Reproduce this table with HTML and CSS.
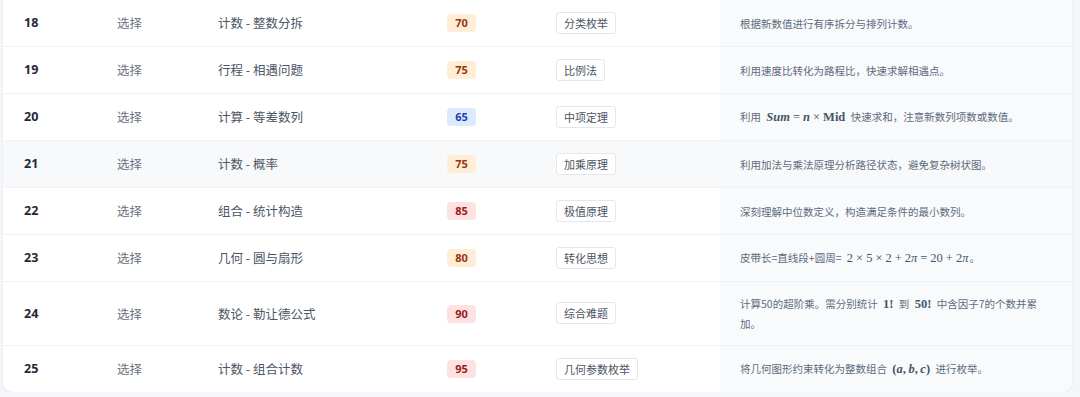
FILE: index.html
```html
<!DOCTYPE html>
<html lang="zh-CN">
<head>
<meta charset="utf-8">
<title>题目分析</title>
<link rel="stylesheet" href="styles.css">
</head>
<body>
<div class="card">
  <table class="tbl">
    <colgroup>
      <col class="c1"><col class="c2"><col class="c3"><col class="c4"><col class="c5"><col class="c6">
    </colgroup>
    <tbody>
      <tr>
        <td class="num">18</td><td class="type">选择</td><td class="topic">计数 - 整数分拆</td>
        <td><span class="score orange">70</span></td><td><span class="tag">分类枚举</span></td>
        <td class="desc">根据新数值进行有序拆分与排列计数。</td>
      </tr>
      <tr>
        <td class="num">19</td><td class="type">选择</td><td class="topic">行程 - 相遇问题</td>
        <td><span class="score orange">75</span></td><td><span class="tag">比例法</span></td>
        <td class="desc">利用速度比转化为路程比，快速求解相遇点。</td>
      </tr>
      <tr>
        <td class="num">20</td><td class="type">选择</td><td class="topic">计算 - 等差数列</td>
        <td><span class="score blue">65</span></td><td><span class="tag">中项定理</span></td>
        <td class="desc">利用 <span class="m b"><i>Sum</i><span class="op">=</span><i>n</i><span class="op">×</span>Mid</span> 快速求和，注意新数列项数或数值。</td>
      </tr>
      <tr class="hl">
        <td class="num">21</td><td class="type">选择</td><td class="topic">计数 - 概率</td>
        <td><span class="score orange">75</span></td><td><span class="tag">加乘原理</span></td>
        <td class="desc">利用加法与乘法原理分析路径状态，避免复杂树状图。</td>
      </tr>
      <tr>
        <td class="num">22</td><td class="type">选择</td><td class="topic">组合 - 统计构造</td>
        <td><span class="score red">85</span></td><td><span class="tag">极值原理</span></td>
        <td class="desc">深刻理解中位数定义，构造满足条件的最小数列。</td>
      </tr>
      <tr>
        <td class="num">23</td><td class="type">选择</td><td class="topic">几何 - 圆与扇形</td>
        <td><span class="score orange">80</span></td><td><span class="tag">转化思想</span></td>
        <td class="desc">皮带长=直线段+圆周= <span class="m end">2<span class="op">×</span>5<span class="op">×</span>2<span class="op">+</span>2<i>π</i><span class="op">=</span>20<span class="op">+</span>2<i>π</i></span>。</td>
      </tr>
      <tr>
        <td class="num">24</td><td class="type">选择</td><td class="topic">数论 - 勒让德公式</td>
        <td><span class="score red">90</span></td><td><span class="tag">综合难题</span></td>
        <td class="desc">计算50的超阶乘。需分别统计 <span class="m b">1!</span> 到 <span class="m b">50!</span> 中含因子7的个数并累加。</td>
      </tr>
      <tr>
        <td class="num">25</td><td class="type">选择</td><td class="topic">计数 - 组合计数</td>
        <td><span class="score red">95</span></td><td><span class="tag">几何参数枚举</span></td>
        <td class="desc">将几何图形约束转化为整数组合 <span class="m b">(<i>a</i>,&#8201;<i>b</i>,&#8201;<i>c</i>)</span> 进行枚举。</td>
      </tr>
    </tbody>
  </table>
</div>
</body>
</html>
```

FILE: styles.css
```css
html, body {
  margin: 0;
  padding: 0;
}
body {
  background: #f4f6f9;
  font-family: "Noto Sans CJK SC", "Noto Sans", sans-serif;
  overflow: hidden;
}
.card {
  margin: 0 0 0 3px;
  width: 1069px;
  background: #ffffff;
  border-radius: 0 0 10px 10px;
  box-shadow: 0 1px 3px rgba(15, 23, 42, 0.06);
  overflow: hidden;
}
.tbl {
  width: 100%;
  border-collapse: collapse;
  table-layout: fixed;
}
.c1 { width: 94px; }
.c2 { width: 101px; }
.c3 { width: 229px; }
.c4 { width: 109px; }
.c5 { width: 184px; }
.c6 { width: auto; }
.tbl td {
  height: 22px;
  padding: 12px 20px;
  border-bottom: 1px solid #f0f2f5;
  vertical-align: middle;
  font-size: 12.5px;
  line-height: 20px;
  color: #4b5563;
  white-space: nowrap;
}
.tbl tr:last-child td {
  border-bottom: none;
}
.tbl td.num {
  padding-left: 21px;
  font-weight: 700;
  color: #1f2937;
  font-family: "Noto Sans", "Noto Sans CJK SC", sans-serif;
}
.tbl td.type {
  color: #6b7280;
}
.tbl tr.hl td {
  background: #f8f9fb;
}
.tbl td.desc {
  background: #f8fafc;
  white-space: normal;
  font-size: 10.5px;
  line-height: 19px;
  color: #5f6b7c;
  padding: 12px 26px 12px 20px;
}
.tbl tr.hl td.desc {
  background: #f7f9fb;
}
.score {
  display: inline-block;
  width: 29px;
  height: 18px;
  line-height: 18px;
  text-align: center;
  border-radius: 4px;
  font-family: "Noto Sans", sans-serif;
  font-weight: 700;
  font-size: 11px;
  vertical-align: top;
  margin-top: 1px;
}
.score.orange { background: #ffedd5; color: #9a3412; }
.score.blue { background: #dbeafe; color: #1e40af; }
.score.red { background: #fee2e2; color: #991b1b; }
.tag {
  display: inline-block;
  height: 20px;
  line-height: 20px;
  padding: 0 7px;
  border: 1px solid #e5e7eb;
  border-radius: 3px;
  background: #ffffff;
  font-size: 11px;
  color: #4b5563;
  vertical-align: top;
  margin-top: -1px;
}
.m {
  display: inline-block;
  line-height: 19px;
  font-family: "Liberation Serif", "DejaVu Serif", serif;
  font-size: 12.5px;
  font-weight: 400;
  color: #475569;
  padding: 0 3px;
  white-space: nowrap;
}
.m.end {
  padding-right: 1px;
}
.m.b {
  font-weight: 700;
}
.m i {
  font-style: italic;
}
.m .op {
  font-weight: 400;
  padding: 0 3px;
}
```
